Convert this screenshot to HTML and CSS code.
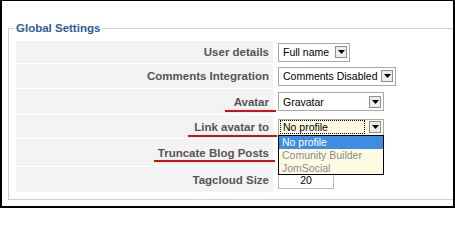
FILE: index.html
```html
<!DOCTYPE html>
<html>
<head>
<meta charset="utf-8">
<title>Global Settings</title>
<link rel="stylesheet" href="styles.css">
</head>
<body>
<div class="frame">
  <fieldset class="settings">
    <legend>Global Settings</legend>
    <div class="grid">
      <div class="label"><span>User details</span></div>
      <div class="control">
        <div class="select w-full"><span class="val">Full name</span><span class="btn"><svg width="7" height="4" viewBox="0 0 7 4"><polygon points="0,0 7,0 3.5,4" fill="#000"/></svg></span></div>
      </div>

      <div class="label"><span>Comments Integration</span></div>
      <div class="control">
        <div class="select w-comments"><span class="val">Comments Disabled</span><span class="btn"><svg width="7" height="4" viewBox="0 0 7 4"><polygon points="0,0 7,0 3.5,4" fill="#000"/></svg></span></div>
      </div>

      <div class="label"><span class="mark mark-avatar">Avatar</span></div>
      <div class="control">
        <div class="select w-avatar"><span class="val">Gravatar</span><span class="btn"><svg width="7" height="4" viewBox="0 0 7 4"><polygon points="0,0 7,0 3.5,4" fill="#000"/></svg></span></div>
      </div>

      <div class="label"><span class="mark mark-link">Link avatar to</span></div>
      <div class="control">
        <div class="select w-avatar open">
          <span class="val focus">No profile</span><span class="btn"><svg width="7" height="4" viewBox="0 0 7 4"><polygon points="0,0 7,0 3.5,4" fill="#000"/></svg></span>
          <ul class="dropdown">
            <li class="selected">No profile</li>
            <li>Comunity Builder</li>
            <li>JomSocial</li>
          </ul>
        </div>
      </div>

      <div class="label"><span class="mark mark-trunc">Truncate Blog Posts</span></div>
      <div class="control"></div>

      <div class="label"><span>Tagcloud Size</span></div>
      <div class="control">
        <div class="text-input">20</div>
      </div>
    </div>
  </fieldset>
</div>
</body>
</html>
```

FILE: styles.css
```css
html, body {
  margin: 0;
  padding: 0;
  background: #fff;
}

.frame {
  width: 455px;
  height: 208px;
  box-sizing: border-box;
  border-top: 1px solid #000;
  border-left: 2px solid #000;
  border-right: 2px solid #000;
  border-bottom: 2px solid #000;
  padding-top: 20px;
  overflow: hidden;
  font-family: "Liberation Sans", Arial, sans-serif;
}

.settings {
  margin: 0 -20px 0 6px;
  padding: 6px 7px 7px 7px;
  border: 1px solid #cfcfcf;
  min-width: 0;
}

.settings legend {
  padding: 0 2px;
  margin-left: -2px;
  font-size: 11.5px;
  font-weight: bold;
  color: #2d5c98;
  line-height: 14px;
}

.grid {
  display: grid;
  grid-template-columns: 257px 1fr;
  grid-template-rows: 22px 24px 25px 23px 27px 25px;
  column-gap: 5px;
  row-gap: 1px;
}

.label {
  background: #f3f3f3;
  display: flex;
  align-items: center;
  justify-content: flex-end;
  padding-right: 4px;
  font-size: 11.5px;
  font-weight: bold;
  color: #555;
}

.control {
  display: flex;
  align-items: center;
}

.mark {
  position: relative;
}

.mark::after {
  content: "";
  position: absolute;
  bottom: -4px;
  height: 2px;
  background: #d41010;
}

.mark-avatar::after { left: -9px; right: -7px; }
.mark-link::after { left: -6px; right: -8px; }
.mark-trunc::after { left: -4px; right: -6px; bottom: -3px; }

.select {
  position: relative;
  display: flex;
  align-items: center;
  height: 19px;
  box-sizing: border-box;
  border: 1px solid #a9a9a9;
  background: #fff;
  padding: 0 2px 0 4px;
  font-size: 10.5px;
  color: #000;
}

.select .val {
  flex: 1;
  min-width: 0;
  white-space: nowrap;
}

.select .btn {
  flex: none;
  width: 12px;
  height: 12px;
  box-sizing: border-box;
  border: 1px solid #8e8e8e;
  background: #ececec;
  display: flex;
  align-items: center;
  justify-content: center;
  margin-left: 4px;
}

.w-full { width: 72px; }
.w-comments { width: 118px; }
.w-avatar { width: 106px; }

.select.open {
  height: 17px;
  margin-top: 1px;
  background: #fffbe3;
  padding: 0 2px 0 1px;
}

.select .focus {
  border: 1px dotted #000;
  height: 14px;
  line-height: 12px;
  padding-left: 2px;
  box-sizing: border-box;
}

.dropdown {
  position: absolute;
  top: 100%;
  left: -1px;
  right: -1px;
  height: 40px;
  box-sizing: border-box;
  overflow: hidden;
  margin: 0;
  padding: 0;
  list-style: none;
  border: 1px solid #000;
  background: #fffbe3;
  z-index: 2;
}

.dropdown li {
  height: 13px;
  line-height: 13px;
  padding-left: 3px;
  color: #8a8a8a;
  font-size: 10.5px;
}

.dropdown li.selected {
  background: #3d8de4;
  color: #fff;
}

.text-input {
  width: 56px;
  height: 19px;
  box-sizing: border-box;
  border: 1px solid #b9b9b9;
  background: #fff;
  text-align: center;
  font-size: 10.5px;
  line-height: 19px;
  color: #000;
}
```
